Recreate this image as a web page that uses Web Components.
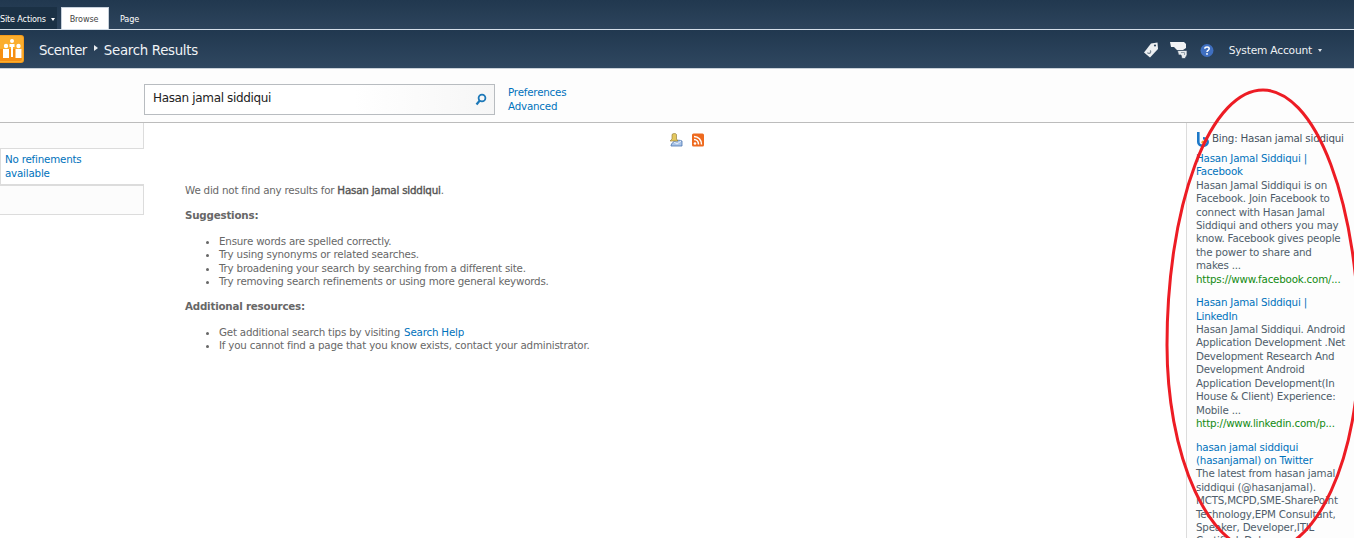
<!DOCTYPE html>
<html>
<head>
<meta charset="utf-8">
<title>Search Results</title>
<style>
  html, body { margin: 0; height: 100%; overflow: hidden; background: #fff; }
  body { font: 10.3px/13.4px "DejaVu Sans", Verdana, sans-serif; letter-spacing: -0.2px; color: #676767; position: relative; }
</style>
</head>
<body>
<sp-ribbon></sp-ribbon>
<sp-titlebar></sp-titlebar>
<sp-searchbar query="Hasan jamal siddiqui"></sp-searchbar>
<sp-content>
  <sp-refiners slot="left"></sp-refiners>
  <sp-noresults slot="main" query="Hasan jamal siddiqui"></sp-noresults>
  <bing-panel slot="right" query="Hasan jamal siddiqui">
    <bing-result title="Hasan Jamal Siddiqui | Facebook" url="https://www.facebook.com/...">Hasan Jamal Siddiqui is on Facebook. Join Facebook to connect with Hasan Jamal Siddiqui and others you may know. Facebook gives people the power to share and<br>makes ...</bing-result>
    <bing-result title="Hasan Jamal Siddiqui | LinkedIn" url="http://www.linkedin.com/p...">Hasan Jamal Siddiqui. Android Application Development .Net Development Research And Development Android Application Development(In House &amp; Client) Experience: Mobile ...</bing-result>
    <bing-result title="hasan jamal siddiqui (hasanjamal) on Twitter" url="">The latest from hasan jamal siddiqui (@hasanjamal). MCTS,MCPD,SME-SharePoint Technology,EPM Consultant, Speaker, Developer,ITIL Certified, Del ...</bing-result>
  </bing-panel>
</sp-content>
<red-ellipse></red-ellipse>

<script>
/* top dark strip with the ribbon tabs */
class SpRibbon extends HTMLElement {
  constructor() {
    super();
    this.attachShadow({ mode: "open" });
    this.shadowRoot.innerHTML = /*html*/ `
      <style>
        :host { display: flex; align-items: flex-end; height: 29px; background: linear-gradient(#21384f, #2d445c); border-bottom: 1px solid #d5dfe9; font: 9px/13px "DejaVu Sans Condensed", "DejaVu Sans", sans-serif; letter-spacing: -0.15px; color: #fff; }
        .actions { width: 57px; height: 22px; background: #1b3145; display: flex; align-items: center; gap: 5px; padding-top: 2px; box-sizing: border-box; white-space: nowrap; overflow: hidden; }
        .actions i { border: 2px solid transparent; border-top: 3px solid #fff; border-bottom: 0; margin-top: 1px; }
        .tab { height: 22px; display: flex; align-items: center; box-sizing: border-box; }
        .on { margin-left: 4px; width: 48px; background: #fff; color: #444; border: 1px solid #c6d0da; border-bottom: 0; justify-content: center; padding: 2px 2px 0 0; }
        .off { padding: 3px 0 0 11px; }
      </style>
      <div class="actions">Site Actions<i></i></div>
      <div class="tab on">Browse</div>
      <div class="tab off">Page</div>`;
  }
}

/* site title, breadcrumb and user menu */
class SpTitlebar extends HTMLElement {
  constructor() {
    super();
    this.attachShadow({ mode: "open" });
    this.shadowRoot.innerHTML = /*html*/ `
      <style>
        :host { display: flex; align-items: center; height: 38px; background: linear-gradient(#21384f, #2f4760); border-bottom: 1px solid #c9d1d9; color: #fff; letter-spacing: 0; }
        .logo { display: block; margin-right: 15px; }
        .crumb { font: 13.33px/18px "DejaVu Sans", sans-serif; color: #f0f3f6; letter-spacing: -0.3px; padding-top: 3px; }
        .crumb.site { letter-spacing: -0.5px; }
        .sep { margin: 0 6px 0 7px; border: 3px solid transparent; border-left: 4px solid #e8ecf0; border-right: 0; position: relative; top: -1px; }
        .right { margin-left: auto; display: flex; align-items: center; padding-top: 2px; }
        .right svg { display: block; }
        .user { font-size: 10.67px; letter-spacing: -0.2px; margin-left: 15px; color: #eef1f4; padding-top: 1px; }
        .user i { display: inline-block; margin: 0 32px 1px 6px; vertical-align: middle; border: 2px solid transparent; border-top: 3px solid #dfe5ea; border-bottom: 0; }
      </style>
      <svg class="logo" width="24" height="28" viewBox="0 0 24 28">
        <rect x="-3" y="0" width="27" height="28" rx="3" fill="#f59a1a"/>
        <rect x="-2" y="1" width="25" height="26" rx="2" fill="#fbae2e"/>
        <rect x="-1" y="14" width="23" height="12" rx="2" fill="#f68f14"/>
        <g fill="#fff">
          <circle cx="6" cy="11" r="2.2"/><circle cx="12" cy="6" r="2"/><circle cx="18.500" cy="11" r="2.2"/>
          <rect x="3" y="14" width="6" height="9"/><rect x="15.500" y="14" width="6" height="9"/>
          <rect x="9.500" y="9" width="5" height="3"/><rect x="11" y="12" width="2" height="10"/>
        </g>
      </svg>
      <span class="crumb site">Scenter</span><span class="sep"></span><span class="crumb">Search Results</span>
      <div class="right">
        <svg width="16" height="17" viewBox="0 0 16 17" style="margin-right:11px">
          <path d="M8 1.500 14.500.5 15 7 7 15.500 1 10.500z" fill="#edf0f2"/>
          <circle cx="12" cy="3.500" r="1.100" fill="#33495f"/>
          <path d="M4.500 10.500c1.500 2.500 4.500-.5 2.500-2" fill="none" stroke="#7d8a96" stroke-width="1.300"/>
        </svg>
        <svg width="18" height="17" viewBox="0 0 18 17" style="margin-right:12px">
          <path d="M0 0h14l2 2v4l-3 2H7L4 5H1z" fill="#f0f2f4"/>
          <path d="M7.500 8.500h9.500v4.500l-2 3.500h-3l-1-3.500H8.500z" fill="#e6eaed" stroke="#33495f" stroke-width=".7"/>
          <path d="M11 10.500h3.500v2.500" fill="none" stroke="#98a3ad" stroke-width="1"/>
        </svg>
        <svg width="14" height="15" viewBox="0 0 14 15">
          <circle cx="7" cy="7.500" r="6.500" fill="#3f6fc0"/>
          <path d="M4.800 5.800C5 3.500 9.200 3.500 9.200 5.800 9.200 7.400 7 7.300 7 9.100" fill="none" stroke="#fff" stroke-width="1.500"/>
          <rect x="6.200" y="10.100" width="1.600" height="1.700" fill="#fff"/>
        </svg>
        <span class="user">System Account<i></i></span>
      </div>`;
  }
}

/* search box with the Preferences and Advanced links */
class SpSearchbar extends HTMLElement {
  constructor() {
    super();
    this.attachShadow({ mode: "open" });
  }
  connectedCallback() {
    this.shadowRoot.innerHTML = /*html*/ `
      <style>
        :host { display: flex; align-items: flex-start; height: 54px; box-sizing: border-box; padding: 15px 0 0 144px; background: #fdfdfd; border-bottom: 1px solid #bcbcbc; }
        .box { width: 351px; height: 31px; box-sizing: border-box; border: 1px solid #b8bcc0; background: linear-gradient(90deg, #fff 60%, #f6f6f6); display: flex; align-items: center; padding: 0 0 2px 8px; font-size: 12px; letter-spacing: -0.35px; color: #222; }
        .box svg { margin-left: auto; margin-right: 7px; margin-top: 2px; }
        .links { margin: 1px 0 0 13px; line-height: 14px; color: #0072bc; }
      </style>
      <div class="box">${this.getAttribute("query")}
        <svg width="12" height="13" viewBox="0 0 12 13"><circle cx="7" cy="5" r="3.400" fill="none" stroke="#1c78b8" stroke-width="1.800"/><path d="M4.600 7.800 1.500 11.500" stroke="#1c78b8" stroke-width="2.200"/></svg>
      </div>
      <div class="links">Preferences<br>Advanced</div>`;
  }
}

/* three column body of the page */
class SpContent extends HTMLElement {
  constructor() {
    super();
    this.attachShadow({ mode: "open" });
    this.shadowRoot.innerHTML = /*html*/ `
      <style>
        :host { display: flex; height: 415px; overflow: hidden; }
        .left { width: 144px; flex: none; }
        .main { flex: 1; min-width: 0; }
        .right { width: 168px; flex: none; box-sizing: border-box; border-left: 1px solid #dcdcdc; background: #fdfdfd; }
      </style>
      <div class="left"><slot name="left"></slot></div>
      <div class="main"><slot name="main"></slot></div>
      <div class="right"><slot name="right"></slot></div>`;
  }
}

class SpRefiners extends HTMLElement {
  constructor() {
    super();
    this.attachShadow({ mode: "open" });
    this.shadowRoot.innerHTML = /*html*/ `
      <style>
        :host { display: block; color: #0072bc; }
        .blank { height: 26px; box-sizing: border-box; background: #fcfcfc; border: solid #dcdcdc; border-width: 0 1px 1px 0; }
        .blank.b2 { height: 31px; border-top-width: 2px; }
        .msg { height: 35px; box-sizing: border-box; padding: 3px 50px 0 4px; line-height: 14px; border-left: 1px solid #dcdcdc; }
      </style>
      <div class="blank"></div>
      <div class="msg">No refinements available</div>
      <div class="blank b2"></div>`;
  }
}

class SpNoresults extends HTMLElement {
  constructor() {
    super();
    this.attachShadow({ mode: "open" });
  }
  connectedCallback() {
    this.shadowRoot.innerHTML = /*html*/ `
      <style>
        :host { display: block; position: relative; padding: 61px 0 0 41px; }
        .feeds { position: absolute; left: 525px; top: 10px; display: flex; gap: 9px; }
        .feeds svg { display: block; }
        p { margin: 0; }
        .q { -webkit-text-stroke: .4px #555; color: #555; font-weight: normal; }
        h4 { margin: 12px 0 12px; font: bold 10.3px/13.4px "DejaVu Sans", sans-serif; }
        ul { margin: 0 0 12px; padding: 0 0 0 34px; }
        a { color: #0072bc; margin-left: 1px; }
      </style>
      <div class="feeds">
        <svg width="14" height="14" viewBox="0 0 14 14">
          <path d="M2 12.500C3 8 9 6 13 8v5H2z" fill="#a9c4e8" stroke="#4a74ae" stroke-width=".8"/>
          <path d="M5 9l3 2 4-3" fill="none" stroke="#e8f0fa" stroke-width="1"/>
          <path d="M3 1.500C4 .2 7 .2 7.500 1.500V6l1.500 2H1l2-2z" fill="#e4c860" stroke="#8a7430" stroke-width=".6"/>
        </svg>
        <svg width="12" height="14" viewBox="0 0 12 14">
          <rect width="12" height="13" y=".5" rx="1.500" fill="#ee6a1f"/>
          <circle cx="3" cy="10.500" r="1.300" fill="#fff"/>
          <path d="M2 6.500c2.500 0 4.500 2 4.500 5M2 3.500c4.500 0 7.500 3.500 7.500 8" fill="none" stroke="#fff" stroke-width="1.500"/>
        </svg>
      </div>
      <p>We did not find any results for <b class="q">${this.getAttribute("query")}</b>.</p>
      <h4>Suggestions:</h4>
      <ul>
        <li>Ensure words are spelled correctly.</li>
        <li>Try using synonyms or related searches.</li>
        <li>Try broadening your search by searching from a different site.</li>
        <li>Try removing search refinements or using more general keywords.</li>
      </ul>
      <h4>Additional resources:</h4>
      <ul>
        <li>Get additional search tips by visiting <a>Search Help</a></li>
        <li>If you cannot find a page that you know exists, contact your administrator.</li>
      </ul>`;
  }
}

class BingPanel extends HTMLElement {
  constructor() {
    super();
    this.attachShadow({ mode: "open" });
  }
  connectedCallback() {
    this.shadowRoot.innerHTML = /*html*/ `
      <style>
        :host { display: block; padding: 9px 3px 0 9px; color: #4f5d6b; }
        .head { display: flex; align-items: center; gap: 2px; height: 14px; margin-bottom: 6px; white-space: nowrap; color: #46525e; }
        .head svg { flex: none; }
      </style>
      <div class="head">
        <svg width="14" height="15" viewBox="0 0 14 15">
          <path d="M2.300 0v10a4.700 3.800 0 1 0 4.700-3.800" fill="none" stroke="#1c78c8" stroke-width="2.600"/>
          <circle cx="7" cy="10.200" r="1.600" fill="#f0a030"/>
        </svg>
        Bing: ${this.getAttribute("query")}
      </div>
      <slot></slot>`;
  }
}

class BingResult extends HTMLElement {
  constructor() {
    super();
    this.attachShadow({ mode: "open" });
  }
  connectedCallback() {
    this.shadowRoot.innerHTML = /*html*/ `
      <style>
        :host { display: block; margin-bottom: 10.200px; }
        .t { color: #0072bc; }
        .u { color: #118a11; }
      </style>
      <div class="t">${this.getAttribute("title")}</div>
      <div><slot></slot></div>
      <div class="u">${this.getAttribute("url")}</div>`;
  }
}

/* hand drawn annotation over the right column */
class RedEllipse extends HTMLElement {
  constructor() {
    super();
    this.attachShadow({ mode: "open" });
    this.shadowRoot.innerHTML = /*html*/ `
      <style>
        :host { position: absolute; inset: 0; display: block; pointer-events: none; }
        svg { display: block; }
      </style>
      <svg width="1354" height="538"><path d="M1167 345A96 255 0 0 1 1359 345A96 207 0 0 1 1167 345" fill="none" stroke="#ed1c24" stroke-width="3"/></svg>`;
  }
}

customElements.define("sp-ribbon", SpRibbon);
customElements.define("sp-titlebar", SpTitlebar);
customElements.define("sp-searchbar", SpSearchbar);
customElements.define("sp-content", SpContent);
customElements.define("sp-refiners", SpRefiners);
customElements.define("sp-noresults", SpNoresults);
customElements.define("bing-panel", BingPanel);
customElements.define("bing-result", BingResult);
customElements.define("red-ellipse", RedEllipse);
</script>
</body>
</html>
